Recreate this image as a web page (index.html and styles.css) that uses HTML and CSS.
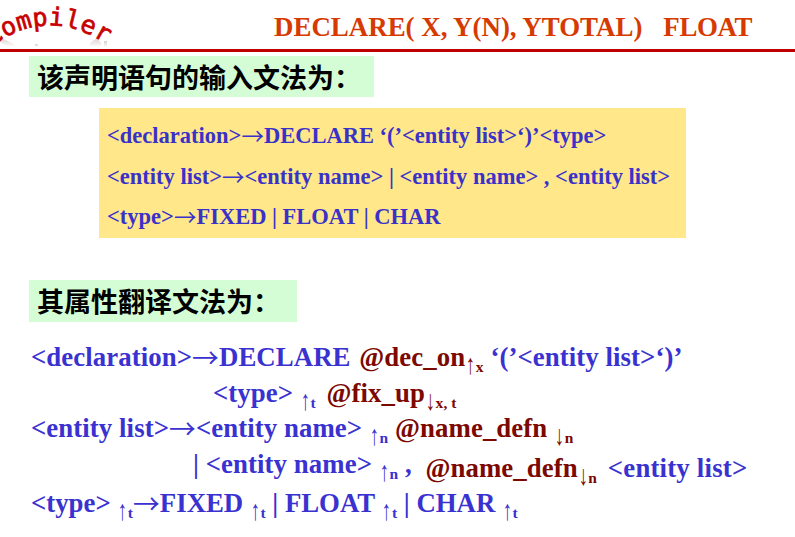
FILE: index.html
```html
<!DOCTYPE html>
<html lang="zh">
<head>
<meta charset="utf-8">
<title>DECLARE</title>
<link rel="stylesheet" href="styles.css">
</head>
<body>
<div class="slide">
  <header class="head">
    <svg class="logo" width="112" height="48" viewBox="0 0 112 48">
      <defs>
        <path id="arc" d="M-8 46 Q 52 2 118 52"/>
        <linearGradient id="fade" x1="0" y1="0" x2="0" y2="1">
          <stop offset="0" stop-color="#dccccc"/>
          <stop offset="1" stop-color="#ffffff"/>
        </linearGradient>
      </defs>
      <path d="M0 37 Q8 41 15 45 L12 47 Q4 45 0 42Z" fill="url(#fade)"/>
      <path d="M35 44 h3 v3 h-3Z" fill="url(#fade)"/>
      <path d="M90 43 Q94 40 97 38 L102 44 L99 47 Q94 47 90 47Z" fill="url(#fade)"/>
      <path d="M104 41 h3 v6 h-3Z" fill="url(#fade)"/>
      <text class="logo-text"><textPath href="#arc" startOffset="0">Compiler</textPath></text>
    </svg>
    <h1 class="title">DECLARE( X, Y(N), YTOTAL)<span class="title-gap"></span><span class="title-end">FLOAT</span></h1>
  </header>
  <div class="rule"></div>

  <div class="callout callout-a">该声明语句的输入文法为：</div>

  <div class="grammar">
    <p>&lt;declaration&gt;<span class="arr">→</span>DECLARE ‘(’&lt;entity list&gt;‘)’&lt;type&gt;</p>
    <p>&lt;entity list&gt;<span class="arr">→</span>&lt;entity name&gt; | &lt;entity name&gt; , &lt;entity list&gt;</p>
    <p>&lt;type&gt;<span class="arr">→</span>FIXED | FLOAT | CHAR</p>
  </div>

  <div class="callout callout-b">其属性翻译文法为：</div>

  <div class="rules">
    <p>&lt;declaration&gt;<span class="arr">→</span>DECLARE <b class="act at1">@dec_on<sub><i>↑</i>x</sub></b> ‘(’&lt;entity list&gt;‘)’</p>
    <p class="l2">&lt;type&gt; <sub><i>↑</i>t</sub> <b class="act at">@fix_up<sub><i>↓</i>x, t</sub></b></p>
    <p class="l3">&lt;entity list&gt;<span class="arr">→</span>&lt;entity name&gt; <sub><i>↑</i>n</sub> <b class="act">@name_defn <sub><i>↓</i>n</sub></b></p>
    <p class="l4">| &lt;entity name&gt; <sub><i>↑</i>n</sub> , <span class="low"><b class="act at2">@name_defn<sub><i>↓</i>n</sub></b> <span class="tail">&lt;entity list&gt;</span></span></p>
    <p class="l5">&lt;type&gt; <sub><i>↑</i>t</sub><span class="arr">→</span>FIXED <sub><i>↑</i>t</sub> | FLOAT <sub><i>↑</i>t</sub> | CHAR <sub><i>↑</i>t</sub></p>
  </div>
</div>
</body>
</html>
```
FILE: styles.css
```css
html, body { margin: 0; padding: 0; background: #fff; }
.slide {
  width: 795px;
  height: 537px;
  overflow: hidden;
  font-family: "Liberation Serif", "Noto Sans CJK SC", serif;
  font-weight: bold;
}
.head {
  display: flex;
  height: 49px;
  justify-content: space-between;
}
.logo { display: block; flex: none; }
.logo-text {
  font-family: "DejaVu Sans Mono", monospace;
  font-size: 25px;
  font-weight: normal;
  letter-spacing: .2px;
  fill: #c80000;
  stroke: #c80000;
  stroke-width: .7px;
}
.title {
  margin: 12px 43px 0 0;
  font-size: 26.9px;
  line-height: 30px;
  font-weight: bold;
  color: #d63a00;
  white-space: nowrap;
}
.title-gap { display: inline-block; width: 21px; }
.title-end { letter-spacing: -.4px; }
.rule { height: 3px; background: #c00000; }
.callout {
  margin-left: 29px;
  height: 41px;
  padding-left: 8px;
  box-sizing: border-box;
  background: #d5fdd5;
  color: #000;
  font-family: "Noto Sans CJK SC", sans-serif;
  font-size: 27px;
  line-height: 41px;
  font-weight: bold;
  white-space: nowrap;
}
.callout-a { margin-top: 4px; width: 345px; }
.callout-b { margin-top: 42px; width: 268px; height: 42px; }
.arr {
  font-family: "Noto Sans CJK SC", sans-serif;
  font-weight: normal;
  line-height: 0;
  vertical-align: -2px;
}
.grammar {
  margin: 11px 0 0 99px;
  width: 587px;
  height: 130px;
  box-sizing: border-box;
  padding: 8px 0 0 8px;
  background: #ffe78a;
  color: #3a32c8;
  font-size: 22.5px;
}
.grammar p {
  margin: 0;
  height: 40.5px;
  line-height: 40px;
  white-space: nowrap;
}
.rules {
  margin-top: 17px;
  padding-left: 31px;
  color: #3a32d0;
  font-size: 26.8px;
  letter-spacing: .08px;
}
.rules p {
  margin: 0;
  white-space: nowrap;
  line-height: 36px;
  height: 36px;
}
.rules sub {
  font-size: 15.5px;
  line-height: 0;
  vertical-align: -6px;
}
.rules i {
  display: inline-block;
  font-style: normal;
  font-weight: normal;
  font-size: 21px;
  line-height: 0;
  transform: scale(.9, 1.35);
}
.act { color: #7c0800; }
.at { margin-left: 4px; }
.at1 { margin-left: 2px; }
.at2 { margin-left: 7px; }
.low { position: relative; top: 4px; }
.l2 { padding-left: 182px; }
.l3 { margin-top: -1px !important; }
.l4 { padding-left: 162px; margin-top: 0 !important; }
.tail { margin-left: 4px; letter-spacing: .2px; }
.l5 { margin-top: 3px !important; letter-spacing: 0; }
```
